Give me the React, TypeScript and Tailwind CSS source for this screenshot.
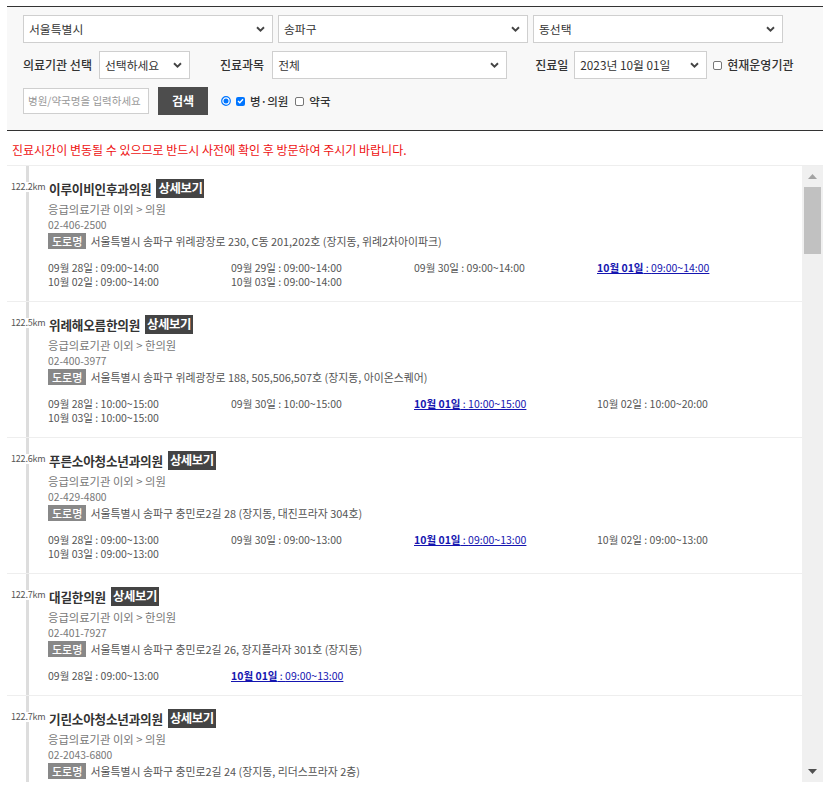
import React from "react";

type Hour = { d: string; t: string; hl?: boolean };
type Item = { km: string; name: string; cat: string; phone: string; addr: string; hours: Hour[] };

const items: Item[] = [
  {
    km: "122.2km",
    name: "이루이비인후과의원",
    cat: "의원",
    phone: "02-406-2500",
    addr: "서울특별시 송파구 위례광장로 230, C동 201,202호 (장지동, 위례2차아이파크)",
    hours: [
      { d: "09월 28일", t: "09:00~14:00" },
      { d: "09월 29일", t: "09:00~14:00" },
      { d: "09월 30일", t: "09:00~14:00" },
      { d: "10월 01일", t: "09:00~14:00", hl: true },
      { d: "10월 02일", t: "09:00~14:00" },
      { d: "10월 03일", t: "09:00~14:00" },
    ],
  },
  {
    km: "122.5km",
    name: "위례해오름한의원",
    cat: "한의원",
    phone: "02-400-3977",
    addr: "서울특별시 송파구 위례광장로 188, 505,506,507호 (장지동, 아이온스퀘어)",
    hours: [
      { d: "09월 28일", t: "10:00~15:00" },
      { d: "09월 30일", t: "10:00~15:00" },
      { d: "10월 01일", t: "10:00~15:00", hl: true },
      { d: "10월 02일", t: "10:00~20:00" },
      { d: "10월 03일", t: "10:00~15:00" },
    ],
  },
  {
    km: "122.6km",
    name: "푸른소아청소년과의원",
    cat: "의원",
    phone: "02-429-4800",
    addr: "서울특별시 송파구 충민로2길 28 (장지동, 대진프라자 304호)",
    hours: [
      { d: "09월 28일", t: "09:00~13:00" },
      { d: "09월 30일", t: "09:00~13:00" },
      { d: "10월 01일", t: "09:00~13:00", hl: true },
      { d: "10월 02일", t: "09:00~13:00" },
      { d: "10월 03일", t: "09:00~13:00" },
    ],
  },
  {
    km: "122.7km",
    name: "대길한의원",
    cat: "한의원",
    phone: "02-401-7927",
    addr: "서울특별시 송파구 충민로2길 26, 장지플라자 301호 (장지동)",
    hours: [
      { d: "09월 28일", t: "09:00~13:00" },
      { d: "10월 01일", t: "09:00~13:00", hl: true },
    ],
  },
  {
    km: "122.7km",
    name: "기린소아청소년과의원",
    cat: "의원",
    phone: "02-2043-6800",
    addr: "서울특별시 송파구 충민로2길 24 (장지동, 리더스프라자 2층)",
    hours: [],
  },
];

function Chevron() {
  return (
    <svg width="9" height="6" viewBox="0 0 9 6" className="shrink-0">
      <path d="M1 1.2 L4.5 4.6 L8 1.2" fill="none" stroke="#444" strokeWidth="1.9" />
    </svg>
  );
}

function FakeSelect({ text, cls }: { text: string; cls: string }) {
  return (
    <div
      className={
        "flex h-[28px] shrink-0 items-center justify-between border border-[#cfcfcf] bg-white pl-[5px] pr-[7px] text-[11.8px] leading-[14px] text-[#333] " +
        cls
      }
    >
      <span>{text}</span>
      <Chevron />
    </div>
  );
}

function Box({ checked }: { checked?: boolean }) {
  if (checked)
    return (
      <span className="inline-flex h-[9px] w-[9px] shrink-0 items-center justify-center rounded-[2px] bg-[#0075ff]">
        <svg width="7" height="6" viewBox="0 0 7 6">
          <path d="M1 3 L2.8 4.7 L6 1.2" fill="none" stroke="#fff" strokeWidth="1.4" />
        </svg>
      </span>
    );
  return <span className="inline-block h-[9px] w-[9px] shrink-0 rounded-[2px] border border-[#767676] bg-white" />;
}

function Radio() {
  return (
    <svg width="10" height="10" viewBox="0 0 10 10" className="shrink-0">
      <circle cx="5" cy="5" r="4.3" fill="#fff" stroke="#0075ff" strokeWidth="1.2" />
      <circle cx="5" cy="5" r="2.5" fill="#0075ff" />
    </svg>
  );
}

function ListItem({ it }: { it: Item }) {
  return (
    <li className="relative border-b border-[#eeeeee]">
      <span className="absolute left-[3px] top-[16px] bg-white px-[1px] text-[9px] leading-[10px] tracking-[-0.2px] text-[#555]">
        {it.km}
      </span>
      <div className="ml-[19px] border-l-[3px] border-[#dddddd] pb-[12px] pl-[20px] pt-[13px]">
        <div className="flex h-[19px] items-center gap-[5px]">
          <span className="text-[12.6px] font-bold leading-[19px] tracking-[-0.2px] text-[#333]">{it.name}</span>
          <span className="h-[19px] bg-[#444444] px-[2px] text-[12.4px] font-bold leading-[19px] tracking-[-0.4px] text-white">
            상세보기
          </span>
        </div>
        <div className="-ml-[1px] mt-[4px] text-[11.3px] leading-[15px] text-[#777]">
          응급의료기관 이외 &gt; {it.cat}
        </div>
        <div className="-ml-[1px] text-[10.3px] leading-[15px] text-[#777]">{it.phone}</div>
        <div className="-ml-[1px] mt-[1px] flex h-[16px] items-center gap-[4px]">
          <span className="h-[16px] bg-[#888888] px-[4px] text-[11px] font-medium leading-[16px] text-white">도로명</span>
          <span className="text-[10.9px] leading-[16px] text-[#555]">{it.addr}</span>
        </div>
        {it.hours.length > 0 && (
          <div className="-ml-[1px] mt-[12px] grid grid-cols-[183px_183px_183px_183px] text-[10.5px] leading-[14px] text-[#555]">
            {it.hours.map((h, i) =>
              h.hl ? (
                <span key={i} className="text-[#1515b0]">
                  <span className="underline">
                    <span className="font-bold">{h.d}</span> : {h.t}
                  </span>
                </span>
              ) : (
                <span key={i}>
                  {h.d} : {h.t}
                </span>
              )
            )}
          </div>
        )}
        {it.hours.length === 0 && <div className="h-[40px]" />}
      </div>
    </li>
  );
}

export default function App() {
  return (
    <div
      className="min-h-[800px] bg-white pt-[6px]"
      style={{ fontFamily: '"Noto Sans CJK KR", "Noto Sans", sans-serif' }}
    >
      <div className="ml-[7px] w-[816px]">
        {/* filter */}
        <div className="border-y border-[#333333] bg-[#f8f8f8] pb-[15px] pl-[16px] pt-[8px]">
          <div className="flex gap-[5px]">
            <FakeSelect text="서울특별시" cls="w-[250px]" />
            <FakeSelect text="송파구" cls="w-[250px]" />
            <FakeSelect text="동선택" cls="w-[250px]" />
          </div>
          <div className="mt-[8px] flex h-[28px] items-center text-[12px] leading-[14px] text-[#333]">
            <span className="font-medium">의료기관 선택</span>
            <FakeSelect text="선택하세요" cls="ml-[7px] w-[91px]" />
            <span className="ml-[30px] font-medium">진료과목</span>
            <FakeSelect text="전체" cls="ml-[8px] w-[235px]" />
            <span className="ml-[28px] font-medium">진료일</span>
            <FakeSelect text="2023년 10월 01일" cls="ml-[6px] w-[133px]" />
            <span className="ml-[6px] flex items-center gap-[5px]">
              <Box />
              <span className="font-medium">현재운영기관</span>
            </span>
          </div>
          <div className="mt-[8px] flex h-[28px] items-center text-[11.5px] leading-[14px] text-[#333]">
            <div className="flex h-[26px] w-[126px] items-center border border-[#cfcfcf] bg-white pl-[4px] text-[10.5px] text-[#999]">
              병원/약국명을 입력하세요
            </div>
            <div className="ml-[9px] flex h-[28px] w-[50px] items-center justify-center bg-[#4d4d4d] text-[12px] font-bold text-white">
              검색
            </div>
            <span className="ml-[13px] flex items-center gap-[5px]">
              <Radio />
              <Box checked />
              <span className="font-medium">병·의원</span>
            </span>
            <span className="ml-[7px] flex items-center gap-[5px]">
              <Box />
              <span className="font-medium">약국</span>
            </span>
          </div>
        </div>

        {/* notice */}
        <div className="border-b border-[#eeeeee] pb-[8px] pl-[5px] pt-[11px] text-[12px] leading-[15px] text-[#ee1111]">
          진료시간이 변동될 수 있으므로 반드시 사전에 확인 후 방문하여 주시기 바랍니다.
        </div>

        {/* list */}
        <div className="flex h-[616px]">
          <div className="h-[616px] w-[795px] overflow-hidden">
            <ul>
              {items.map((it, i) => (
                <ListItem key={i} it={it} />
              ))}
            </ul>
          </div>
          <div className="flex w-[21px] flex-col items-center bg-[#f0f0f0]">
            <div className="flex h-[21px] items-center justify-center">
              <svg width="9" height="5" viewBox="0 0 9 5">
                <path d="M0 5 L4.5 0 L9 5 Z" fill="#a3a3a3" />
              </svg>
            </div>
            <div className="h-[67px] w-[17px] bg-[#c1c1c1]" />
            <div className="flex-1" />
            <div className="flex h-[21px] items-center justify-center">
              <svg width="9" height="5" viewBox="0 0 9 5">
                <path d="M0 0 L9 0 L4.5 5 Z" fill="#505050" />
              </svg>
            </div>
          </div>
        </div>
      </div>
    </div>
  );
}
